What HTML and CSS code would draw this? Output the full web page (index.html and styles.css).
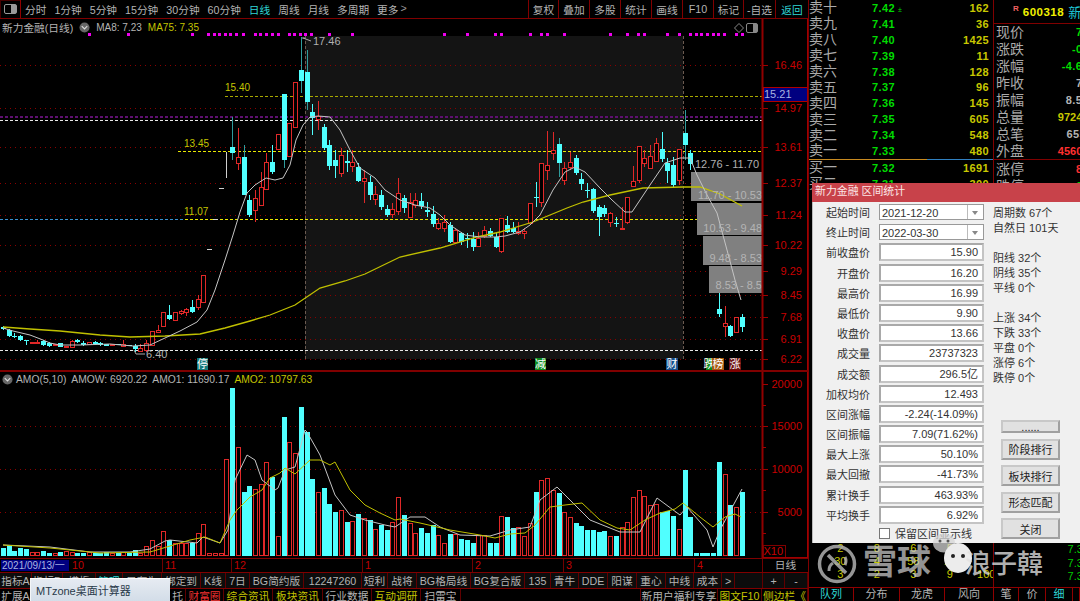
FILE: index.html
```html
<!DOCTYPE html>
<html lang="zh-CN">
<head>
<meta charset="utf-8">
<title>新力金融 日线</title>
<link rel="stylesheet" href="styles.css">
</head>
<body>
<div class="app">
  <section class="left">
    <nav class="topbar">
      <div class="winbtn"><svg width="13" height="10" viewBox="0 0 13 10"><rect x="0.5" y="0.5" width="12" height="9" rx="1.5" fill="none" stroke="#999"/><rect x="7" y="1" width="5" height="8" fill="#999"/></svg></div>
      <div class="periods">
        <span>分时</span><span>1分钟</span><span>5分钟</span><span>15分钟</span><span>30分钟</span><span>60分钟</span><span class="cyan">日线</span><span>周线</span><span>月线</span><span>多周期</span><span>更多</span><span class="more">&gt;</span>
      </div>
      <div class="tools">
        <span>复权</span><span>叠加</span><span>多股</span><span>统计</span><span>画线</span><span>F10</span><span>标记</span><span>-自选</span><span class="cyan">返回</span>
      </div>
    </nav>
    <div class="panel panel-main">
      <svg id="main" class="chart" width="808" height="351" viewBox="0 19 808 351"></svg>
      <div class="legend">
        <span>新力金融(日线)</span>
        <svg class="fold" width="11" height="11" viewBox="0 0 12 12"><circle cx="6" cy="6" r="5.5" fill="#666"/><path d="M3 4.5 6 7.5 9 4.5" fill="none" stroke="#ddd" stroke-width="1.2"/></svg>
        <span class="tight">MA8: 7.23</span><span class="yel tight">MA75: 7.35</span>
        <span class="legend-end">
          <svg width="10" height="10" viewBox="0 0 10 10"><path d="M5 .5 9.5 5 5 9.500 .5 5Z" fill="none" stroke="#888"/></svg>
          <svg width="12" height="10" viewBox="0 0 12 10"><rect x="0.5" y="0.5" width="11" height="9" rx="1.500" fill="none" stroke="#888"/><rect x="7" y="1" width="4" height="8" fill="#888"/></svg>
        </span>
      </div>
    </div>
    <div class="panel panel-amo">
      <svg id="amo" class="chart" width="808" height="186" viewBox="0 372 808 186"></svg>
      <div class="legend legend-amo">
        <svg class="fold" width="11" height="11" viewBox="0 0 12 12"><circle cx="6" cy="6" r="5.5" fill="#666"/><path d="M3 4.5 6 7.5 9 4.5" fill="none" stroke="#ddd" stroke-width="1.2"/></svg>
        <span class="amo-first">AMO(5,10)</span><span>AMOW: 6920.22</span><span>AMO1: 11690.17</span><span class="yel">AMO2: 10797.63</span>
      </div>
    </div>
    <div class="dates">
      <span class="date-now">2021/09/13/一</span><span>11</span><span>12</span><span>1</span><span>2</span><span>3</span><span>4</span><span class="date-unit">日线</span>
    </div>
    <div class="dates-first">10</div>
    <div class="tb tb1">
      <span>指标A</span><span>指标B</span><span>模板</span><span class="cyan">管理</span><span>只有为</span><span>绑定到</span><span>K线</span><span>7日</span><span>BG简约版</span><span>12247260</span><span>短利</span><span>战将</span><span>BG格局线</span><span>BG复合版</span><span>135</span><span>青牛</span><span>DDE</span><span>阳谋</span><span>重心</span><span>中线</span><span>成本</span><span>&gt;</span><span></span><span>+</span><span>-</span>
    </div>
    <div class="tb tb2">
      <span>扩展A</span><span></span><span>托</span><span class="red">财富圈</span><span class="yel">综合资讯</span><span class="yel">板块资讯</span><span>行业数据</span><span class="yel">互动调研</span><span>扫雷宝</span><span></span><span>新用户福利专享</span><span class="yel">图文F10</span><span class="yel">侧边栏《</span>
    </div>
  </section>

  <aside class="right">
    <div class="right-top">
      <div class="book">
        <div class="row"><b>卖十</b><i>7.42<small>±</small></i><u>162</u></div>
        <div class="row"><b>卖九</b><i>7.41</i><u>36</u></div>
        <div class="row"><b>卖八</b><i>7.40</i><u>1425</u></div>
        <div class="row"><b>卖七</b><i>7.39</i><u>11</u></div>
        <div class="row"><b>卖六</b><i>7.38</i><u>128</u></div>
        <div class="row"><b>卖五</b><i>7.37</i><u>96</u></div>
        <div class="row"><b>卖四</b><i>7.36</i><u>145</u></div>
        <div class="row"><b>卖三</b><i>7.35</i><u>605</u></div>
        <div class="row"><b>卖二</b><i>7.34</i><u>548</u></div>
        <div class="row"><b>卖一</b><i>7.33</i><u>480</u></div>
        <div class="book-mid"></div>
        <div class="row"><b>买一</b><i>7.32</i><u>1691</u></div>
        <div class="row"><b>买二</b><i>7.31</i><u>300</u></div>
        <div class="ticks">
          <span>2</span><span>8</span><span>6</span><span>5</span><span></span>
          <span>30</span><span>4</span><span>58</span><span>13</span><span></span>
          <span>3</span><span>2</span><span>3</span><span>9</span><span>100</span>
        </div>
      </div>
      <div class="info">
        <div class="code"><em>R</em><strong>600318</strong><span>新力金融</span></div>
        <div class="irow"><b>现价</b><span class="grn">7.32</span></div>
        <div class="irow"><b>涨跌</b><span class="grn">-0.35</span></div>
        <div class="irow"><b>涨幅</b><span class="grn">-4.60%</span></div>
        <div class="irow"><b>昨收</b><span>7.67</span></div>
        <div class="irow"><b>振幅</b><span>8.50%</span></div>
        <div class="irow"><b>总量</b><span class="yel wide">972414</span></div>
        <div class="irow"><b>总笔</b><span>65512</span></div>
        <div class="irow"><b>外盘</b><span class="hot wide">456012</span></div>
        <div class="irow irow-top"><b>涨停</b><span class="hot">8.44</span></div>
        <div class="irow"><b>跌停</b><span class="grn">6.90</span></div>
        <div class="last-ticks"><span>7.32</span><span>7.33</span><span>7.32</span></div>
      </div>
    </div>
    <div class="tabs">
      <span class="cyan">队列</span><span>分布</span><span>龙虎</span><span>风向</span><span>笔</span><span>价</span><span class="cyan">细</span><span></span>
    </div>
  </aside>
</div>

<div class="tip">MTzone桌面计算器</div>

<div class="dialog">
  <div class="dlg-title">新力金融 区间统计</div>
  <div class="dlg-body">
    <div class="form">
      <label>起始时间</label><div class="combo"><span>2021-12-20</span><i></i></div>
      <label>终止时间</label><div class="combo"><span>2022-03-30</span><i></i></div>
      <label>前收盘价</label><div class="inp">15.90</div>
      <label>开盘价</label><div class="inp">16.20</div>
      <label>最高价</label><div class="inp">16.99</div>
      <label>最低价</label><div class="inp">9.90</div>
      <label>收盘价</label><div class="inp">13.66</div>
      <label>成交量</label><div class="inp">23737323</div>
      <label>成交额</label><div class="inp">296.5亿</div>
      <label>加权均价</label><div class="inp">12.493</div>
      <label>区间涨幅</label><div class="inp">-2.24(-14.09%)</div>
      <label>区间振幅</label><div class="inp">7.09(71.62%)</div>
      <label>最大上涨</label><div class="inp">50.10%</div>
      <label>最大回撤</label><div class="inp">-41.73%</div>
      <label>累计换手</label><div class="inp">463.93%</div>
      <label>平均换手</label><div class="inp">6.92%</div>
      <div class="check"><i></i><span>保留区间显示线</span></div>
    </div>
    <div class="stats">
      <p>周期数 67个</p><p>自然日 101天</p><p class="gap">阳线 32个</p><p>阴线 35个</p><p>平线 0个</p><p class="gap">上涨 34个</p><p>下跌 33个</p><p>平盘 0个</p><p>涨停 6个</p><p>跌停 0个</p>
      <div class="btns">
        <button class="dots">......</button><button>阶段排行</button><button>板块排行</button><button>形态匹配</button><button>关闭</button>
      </div>
    </div>
  </div>
</div>

<div class="mark">
  <svg class="mark-logo" width="40" height="42" viewBox="0 0 40 42"><circle cx="20" cy="21" r="17.500" fill="none" stroke="#b0b0b0" stroke-width="3.500"/><path d="M11 12 29 30" stroke="#b0b0b0" stroke-width="3.500" fill="none"/><path d="M12 28a9 9 0 0 1 4-8M28 14a9 9 0 0 1 0 8" stroke="#b0b0b0" stroke-width="3" fill="none"/></svg>
  <span class="mark-a">雪球</span>
  <svg class="mark-chat" width="42" height="42" viewBox="0 0 42 42"><ellipse cx="12" cy="10" rx="11" ry="9.500" fill="#d6d6d6" fill-opacity=".75"/><circle cx="8" cy="8" r="1.500" fill="#555"/><circle cx="16" cy="8" r="1.500" fill="#555"/><ellipse cx="26" cy="25" rx="14" ry="15" fill="#ececec"/><circle cx="21" cy="23" r="2" fill="#222"/><circle cx="31" cy="23" r="2" fill="#222"/></svg>
  <span class="mark-b">浪子韓</span>
</div>
<script src="chart.js"></script>
</body>
</html>
```
FILE: styles.css
```css
*{box-sizing:border-box}
html,body{margin:0;padding:0;width:1080px;height:601px;overflow:hidden;background:#000}
body{position:relative;color:#b4b4b4;font:10.7px "Liberation Sans","Noto Sans CJK SC",sans-serif}
.cyan{color:#2fd6d6}
.yel{color:#c4c400}
.red{color:#f03030}
.app{display:flex;width:1080px;height:601px}
.left{width:808px;flex:none;display:flex;flex-direction:column;position:relative}
.topbar{height:19px;flex:none;display:flex;align-items:center;border-bottom:1px solid #800000}
.winbtn{width:21px;height:18px;border-right:1px solid #900000;display:flex;align-items:center;justify-content:center;box-shadow:inset 1px 1px 0 #400}
.periods{display:flex;gap:8px;padding-left:4px;flex:1}
.more{color:#999;margin-left:-6px}
.tools{display:grid;grid-template-columns:30px 31px 31px 31px 31px 31px 30px 32px 33px;height:18px;width:280px}
.tools span{border-left:1px solid #800000;display:flex;align-items:center;justify-content:center}
.panel{position:relative;flex:none}
.panel-main{height:351px}
.panel-amo{height:188px;border-top:2px solid #800000}
.chart{display:block}
.legend{position:absolute;left:0;right:50px;top:0;height:17px;display:flex;align-items:center;gap:6px;padding-left:2px;font-size:10.7px}
.tight{font-size:10px}
.legend-end{margin-left:auto;display:flex;gap:2px;align-items:center}
.fold{flex:none}
.legend-amo{top:0;height:14px;gap:5px;font-size:10.300px}
.amo-first{margin-left:-2px}
.dates{height:14px;flex:none;display:grid;grid-template-columns:162px 69px 131px 110px 91px 131px 68px 46px;border-top:1px solid #800000;color:#c00000;font-size:10.700px}
.dates span{border-left:1px solid #700000;padding-left:2px;line-height:13px}
.dates .date-now{background:#000080;color:#a9b4e0;margin:1px;border:0;padding:0 0 0 1px;line-height:11px;width:68px;font-size:10px;white-space:nowrap;overflow:hidden}
.dates-first{position:absolute;left:72px;top:558px;color:#c00000;line-height:14px;font-size:10.700px}
.dates .date-unit{color:#b4b4b4;text-align:center;padding:0}
.tb{flex:none;display:grid;border-top:1px solid #800000}
.tb span{display:flex;align-items:center;justify-content:center;white-space:nowrap;overflow:hidden;border-right:1px solid #600000}
.tb1{height:16px;grid-template-columns:32px 31px 33px 27px 39px 39px 25px 24px 54px 58px 26px 29px 54px 54px 26px 28px 29px 29px 29px 28px 28px 13px 28px 22px 23px;background:#0c0c0c}
.tb2{height:13px;grid-template-columns:32px 138px 16px 38px 49px 50px 49px 49px 40px 180px 77px 44px 46px}
.right{width:272px;flex:none;display:flex;flex-direction:column;border-left:1px solid #800000}
.right-top{height:587px;flex:none;display:flex}
.book{width:184px;flex:none;display:flex;flex-direction:column}
.row{height:15.9px;flex:none;display:grid;grid-template-columns:63px 1fr 60px;padding-right:4px;align-items:center}
.row b{font-weight:400;font-size:14px;color:#aaa;line-height:15px;white-space:nowrap}
.row i{font:700 11px "Liberation Sans",sans-serif;letter-spacing:.4px;color:#00dc00}
.row i small{font-size:7px;font-weight:400;margin-left:3px}
.row u{font:700 11px "Liberation Sans",sans-serif;letter-spacing:.4px;text-decoration:none;text-align:right;color:#c8c800}
.book-mid{height:1px;flex:none;margin-bottom:.1px;background:linear-gradient(90deg,#c88a20 0 64%,#3080c0 64% 100%)}
.ticks{margin-top:auto;height:45px;display:grid;grid-template-columns:repeat(5,36.500px);grid-auto-rows:13px;font-size:11px;color:#c8c800;text-align:center;padding:0 0 4px 13px;overflow:hidden}
.info{flex:1;border-left:1px solid #800000;overflow:hidden;display:flex;flex-direction:column}
.code{height:24px;flex:none;border-bottom:1px solid #800000;display:flex;align-items:center;white-space:nowrap;padding-left:19px;gap:4px}
.code em{font:700 8px "Liberation Sans",sans-serif;color:#f06060;align-self:flex-start;margin-top:4px}
.code strong{font:700 11.500px "Liberation Sans",sans-serif;letter-spacing:.5px;color:#f0f000}
.code span{font-size:13px;color:#1fc8d8}
.irow{height:16.900px;flex:none;display:flex;justify-content:space-between;align-items:center;white-space:nowrap}
.irow b{font-weight:400;font-size:14px;color:#aaa;line-height:16px;padding-left:2px}
.irow span{font:700 11px "Liberation Sans",sans-serif;letter-spacing:.4px;margin-right:-19px;color:#b4b4b4}
.irow .wide{letter-spacing:.1px;margin-right:-15px}
.irow .grn{color:#00dc00}
.irow .yel{color:#c8c800}
.irow .hot{color:#ff3030}
.irow-top{border-top:1px solid #800000;height:18px}
.last-ticks{margin-top:auto;height:44px;display:grid;grid-auto-rows:13.500px;justify-items:end;color:#00c800;font-size:11px;padding-bottom:2px}
.last-ticks span{margin-right:-9px}
.tabs{height:14px;flex:none;display:grid;grid-template-columns:45px 46px 45px 49px 25px 27px 27px 7px;border-top:1px solid #900000;font-size:11px}
.tabs span{display:flex;align-items:center;justify-content:center;border-right:1px solid #900000;line-height:13px;overflow:hidden}
.tip{position:absolute;left:30px;top:578px;width:140px;height:23px;background:linear-gradient(#e6ebf2,#d3dde8);border-top:1px solid #fff;border-left:1px solid #f4f6f8;color:#2a3a4a;font-size:11px;padding:5px 0 0 5px;line-height:14px}
.dialog{position:absolute;left:812px;top:183px;width:268px;height:360px;background:#f0f0f0;color:#222;border-left:1px solid #bbb;font-size:11px}
.dlg-title{height:19px;background:#c8424a;color:#fbe6e6;line-height:17px;padding-left:3px;font-size:10.900px;margin-left:-1px}
.dlg-body{display:flex;padding-top:1px}
.form{display:grid;grid-template-columns:57px 105px;column-gap:9px;row-gap:2.200px;align-items:center;grid-auto-rows:18px}
.form label{text-align:right;white-space:nowrap;color:#333}
.inp,.combo{height:18px;background:#fff;border:2px solid #a9a9a9;border-right-color:#c4c4c4;border-bottom-color:#c4c4c4;line-height:14px}
.inp{text-align:right;padding-right:4px;color:#333}
.combo{display:flex;justify-content:space-between;padding-left:2px;border-width:1px;border-color:#999;line-height:16px;margin:1px 0;height:16px;color:#333}
.combo i{width:16px;border-left:1px solid #bbb;position:relative}
.combo i::after{content:"";position:absolute;left:4px;top:6px;border:3px solid transparent;border-top:4px solid #888;border-bottom:0}
.check{grid-column:2;display:flex;gap:5px;align-items:center;height:14px;align-self:start;white-space:nowrap;color:#333}
.check i{width:11px;height:11px;background:#fff;border:1px solid #777}
.stats{margin-left:9px;flex:1;padding-top:3px}
.stats p{margin:0;height:15px;line-height:15px;white-space:nowrap;color:#333}
.stats .gap{margin-top:15px}
.btns{display:flex;flex-direction:column;margin:34px 0 0 8px;width:59px;gap:5.500px}
.btns button{height:21px;padding:0;background:#e1e1e1;border:2px solid #a0a0a0;border-top-color:#c8c8c8;border-left-color:#c8c8c8;font:11px "Liberation Sans","Noto Sans CJK SC",sans-serif;color:#222}
.btns .dots{height:13px;line-height:8px}
.mark{position:absolute;left:817px;top:533px;width:240px;height:54px;display:flex;pointer-events:none}
.mark-logo{margin-top:10px;flex:none;opacity:.85}
.mark-a{font-size:34px;font-weight:700;line-height:50px;color:rgba(205,205,205,.72);margin:4px 0 0 6px;white-space:nowrap;width:70px}
.mark-chat{margin-left:-1px;flex:none}
.mark-b{font:500 26px "Noto Sans CJK TC","Noto Sans CJK SC",sans-serif;line-height:44px;color:rgba(225,225,225,.8);margin:7px 0 0 -9px;white-space:nowrap}
.gl{stroke:#8a0000;stroke-width:1;stroke-dasharray:1 4}
.vd{stroke:#6a5a50;stroke-dasharray:3 2}
.ax{fill:#c80000;font:11px "Liberation Sans",sans-serif;text-anchor:end}
.axl{stroke:#a00000;stroke-width:1}
.axs{stroke:#900000;stroke-width:2}
.lb{fill:#c4c400;font:10px "Liberation Sans",sans-serif}
.pk{fill:#b0b0b0;font:11px "Liberation Sans",sans-serif}
.proft{fill:#b4b4b4;font:11px "Liberation Sans",sans-serif;text-anchor:end}
.bg{fill:#fff;font:11px "Noto Sans CJK SC",sans-serif;text-anchor:middle}
.ma1{fill:none;stroke:#c4c4c4;stroke-width:1}
.ma2{fill:none;stroke:#c0c000;stroke-width:1.300}
.ma2t{stroke-width:1}
.curr{fill:#000080;stroke:#b00000}
.currt{fill:#a9b4e0;font:11px "Liberation Sans",sans-serif}
.x10{fill:none;stroke:#800000}
```
FILE: chart.js
```js
var z11 = function (v) { return 100 + v / 3; };
var X = function (i) { return Math.round(3 + 5.727 * i); };

var early = [
 ['d',327,329,326,330],['d',330,336,329,337],['d',336,337,333,338],['d',336,340,335,341],['d',340,341,340,345],
 ['u',342,343,342,344],['u',342,343,340,344],['d',341,345,340,346],['d',343,346,342,347],['u',344,345,344,345],
 ['d',343,347,343,347],['u',346,347,346,347],['u',341,347,340,347],['d',340,342,339,343],['d',343,345,341,346],
 ['u',342,344,342,344],['d',342,344,341,345],['d',343,345,342,346],['d',344,346,344,346],['u',344,345,344,345],
 ['d',344,345,344,345],['u',344,346,340,347],['d',345,346,345,346],['d',346,349,344,352],['u',348,351,344,352],
 ['u',343,350,340,352],['u',331,345,331,346],['u',330,332,325,333],['u',312,326,312,326],['d',315,319,305,320],
 ['u',312,320,312,320],['u',311,313,310,315],['u',309,312,308,316],['d',307,312,300,313],['u',299,307,295,310],
 ['u',275,302,275,302],['g',249,249,249,249],['g',219,219,219,219],['g',188,188,188,188],['g',165,165,152,178],
 ['d',147,153,117,160],['u',157,163,128,170],['d',157,195,145,195],['d',200,215,195,217],['u',198,210,190,222],
 ['u',187,205,172,206],['u',162,189,153,190],['d',162,172,145,174],['u',134,149,134,150],['d',94,160,94,168],
 ['u',123,156,123,156],['u',82,127,82,128],['d',70,81,37,93],['d',72,102,50,110],['d',112,118,104,135],
 ['u',116,119,101,130],['d',127,148,124,150],['d',145,166,140,170],['d',160,166,150,178],['u',155,173,148,177],
 ['d',161,163,150,172],['u',162,166,150,172],['d',167,181,163,182],['u',178,181,170,203],['d',182,195,176,200],
 ['u',194,199,186,205],['d',195,207,190,210],['d',209,215,205,217],['u',209,214,203,218],['u',193,211,178,215]
];
var mid = [
 ['d',295,325,285,340],['u',305,350,280,352],['u',300,315,280,325],['d',302,318,278,328],['d',330,335,305,352],
 ['d',342,372,318,380],['u',370,383,355,390],['u',367,383,345,395],['d',376,425,365,430],['u',390,425,385,430],
 ['d',400,425,395,435],['d',415,418,400,445],['d',418,440,395,452],['u',415,437,395,440],['u',390,408,378,415],
 ['d',392,408,385,412],['d',410,440,395,445],['u',355,452,355,458],['d',375,395,347,400],['d',383,395,365,400],
 ['u',392,400,365,405],['u',394,398,385,418],['u',308,368,308,375],['d',290,293,247,320],['u',190,305,190,320],
 ['u',195,210,93,240],['u',150,158,97,180],['d',132,188,115,230],['u',205,240,185,255],['u',185,200,155,210],
 ['d',175,218,165,225],['d',237,253,220,270],['d',270,272,250,295],['d',267,332,265,340],['d',320,350,315,408],
 ['d',325,342,315,350],['u',340,367,335,382],['d',370,372,350,380],['u',384,385,320,388],['u',290,365,290,372],
 ['u',242,257,198,260],['u',137,240,137,248],['u',175,190,150,200],['u',168,205,135,208],['u',130,182,113,185],
 ['d',148,178,95,185],['d',190,213,175,250],['d',195,255,170,262],['u',148,240,148,255],['d',98,135,30,180],
 ['d',160,192,150,210]
].map(function (c) { return [c[0], z11(c[1]), z11(c[2]), z11(c[3]), z11(c[4])]; });
var hidden = [null, null, null, null];
var late = [
 ['d',628,643,580,650],['u',668,677,618,710],['d',678,708,675,710],['u',650,697,650,697],['d',650,680,642,697]
].map(function (c) { return [c[0], z11(c[1]), z11(c[2]), z11(c[3]), z11(c[4])]; });
var candles = early.concat(mid, hidden, late);

var vols = [548,545,551,548,549,552,552,551,553,553,552,551,552,553,553,552,553,553,552,553,
 553,552,553,550,553,546,540,546,531,540,543,543,543,543,533,524,553,553,553,459,
 388,447,492,486,489,484,462,477,536,417,442,453,407,432,479,492,488,504,512,510,
 522,521,514,518,520,529,525,530,522,497,515,523,533,528,533,525,535,543,534,534,
 539,540,543,535,535,543,543,516,517,528,527,536,523,492,480,478,490,493,512,517,
 523,526,530,530,532,531,536,536,527,522,497,490,496,505,504,512,511,516,529,470,
 517,553,553,553,553,462,474,505,507,492];

function pts(a) { return a.map(function (p) { return p[0] + ',' + p[1]; }).join(' '); }
function line(x1, y1, x2, y2, cls, attr) {
  return '<line x1="' + x1 + '" y1="' + y1 + '" x2="' + x2 + '" y2="' + y2 + '" class="' + cls + '" ' + (attr || '') + '/>';
}
function rect(x, y, w, h, fill, stroke) {
  return '<rect x="' + x + '" y="' + y + '" width="' + w + '" height="' + h + '" fill="' + fill + '"' + (stroke ? ' stroke="' + stroke + '"' : '') + ' shape-rendering="crispEdges"/>';
}
function text(x, y, s, cls) { return '<text x="' + x + '" y="' + y + '" class="' + cls + '">' + s + '</text>'; }
function dash(x1, x2, y, color, w) {
  return '<line x1="' + x1 + '" y1="' + y + '" x2="' + x2 + '" y2="' + y + '" stroke="' + color + '" stroke-width="' + (w || 1) + '" stroke-dasharray="3 2" shape-rendering="crispEdges"/>';
}

var RED = '#e02828', CY = '#50ffff', TEAL = '#2f9c9c';
var m = '';
m += rect(305, 36, 378, 323, '#141414');
var ticks = [[16.46,65],[14.97,108],[13.61,147],[12.37,183],[11.24,215],[10.22,245],[9.29,271],[8.45,295],[7.68,317],[6.91,339],[6.22,359]];
ticks.forEach(function (t) { m += line(0, t[1] + .5, 762, t[1] + .5, 'gl'); });
m += line(305.5, 36, 305.5, 359, 'vd') + line(683.5, 36, 683.5, 359, 'vd');
var dots = [88,127,191,207,213,218,224,229,235,242,254,259,265,271,277,288,293,299,304,310,328,351,443,466,494,500,529,540,546,563,609,626,637,643,666,678,689,695,700,706,712,717,723,735,741];
dots.forEach(function (x) { m += rect(x, 33, 3, 3, '#f000f0'); });

m += dash(0, 762, 117, '#5e1070', 2);
m += dash(0, 762, 120.5, '#e8e8e8');
m += dash(0, 762, 350.5, '#e8e8e8');
m += dash(225, 762, 96, '#a8a800');
m += dash(178, 762, 151.5, '#e8e800');
m += dash(0, 185, 219.500, '#3a90d0');
m += dash(185, 762, 219.500, '#e8e800');

candles.forEach(function (c, i) {
  if (!c) return;
  var x = X(i), t = c[0], top = Math.round(c[1]), bot = Math.round(c[2]), wt = Math.round(c[3]), wb = Math.round(c[4]);
  if (t === 'g') {
    if (wb > wt) m += rect(x, wt, 1, wb - wt, '#cfcfcf');
    else m += rect(x - 2, top, 5, 1, '#cfcfcf');
    return;
  }
  var col = t === 'u' ? RED : CY;
  var wc = t === 'u' ? RED : (wb - wt > 35 ? TEAL : CY);
  if (wt < top) m += rect(x, wt, 1, top - wt, wc);
  if (wb > bot) m += rect(x, bot, 1, wb - bot, wc);
  if (t === 'u') m += rect(x - 2 + .5, top + .5, 4, Math.max(bot - top, 1), '#000', col);
  else m += rect(x - 2, top, 5, Math.max(bot - top, 1), col);
});

[[691,172,71,29],[697,203,65,32],[703,236,59,29],[709,266,53,27]].forEach(function (b) { m += rect(b[0], b[1], b[2], b[3], '#808080'); });

var ma8 = [[3,328],[13,331],[30,335],[43,340],[50,343],[60,345],[80,345],[110,344],[133,346],[150,345],[165,338],[180,331],[197,322],[207,310],[215,290],[225,260],[233,235],[240,212],[247,193],[255,185],[266,178],[275,180],[283,178],[290,165],[296,140],[303,125],[310,117],[318,116],[330,117],[340,130],[350,150],[360,168],[375,178],[385,190],[400,200],[415,205],[430,208],[440,215],[450,225],[465,235],[480,237],[495,237],[505,236],[520,232],[530,225],[540,215],[553,190],[565,172],[575,167],[585,172],[600,188],[612,200],[625,212],[632,212],[640,200],[650,185],[665,163],[680,158],[690,158],[697,175],[707,195],[717,213],[727,250],[735,280],[741,300]];
var ma75 = [[3,327],[30,329],[60,331],[100,335],[130,337],[165,336],[200,334],[225,328],[250,321],[270,315],[295,305],[320,288],[345,281],[365,274],[400,257],[440,248],[477,237],[500,232],[533,222],[567,208],[583,202],[610,195],[643,188],[683,187],[700,187],[720,194],[742,206]];
m += '<polyline class="ma2" points="' + pts(ma75) + '"/>';
m += '<polyline class="ma1" points="' + pts(ma8) + '"/>';

m += text(225, 91, '15.40', 'lb') + text(184, 147, '13.45', 'lb') + text(184, 215, '11.07', 'lb');
m += text(313, 45, '17.46', 'pk') + text(146, 358, '6.40', 'pk');
m += '<path d="M302 38h3M303 38l8 3" stroke="#aaa" fill="none"/><path d="M134 350l2 4h9" stroke="#aaa" fill="none"/>';
m += text(695, 168, '12.76 - 11.70', 'pk');
m += text(762, 199, '11.70 - 10.53', 'proft') + text(762, 232, '10.53 - 9.48', 'proft') + text(762, 262, '9.48 - 8.53', 'proft') + text(762, 289, '8.53 - 8.5', 'proft');

[[197,11,'#157a7a','停'],[535,11,'#0c8a20','减'],[666,12,'#14508c','财'],[706,6,'#0c8a20','跌'],[712,12,'#a85a10','榜'],[729,12,'#6e1212','涨']].forEach(function (b) {
  m += rect(b[0], 358, b[1], 12, b[2]);
  m += text(b[0] + b[1] / 2, 368, b[3], 'bg');
});

m += line(762.5, 19, 762.5, 370, 'axs');
ticks.forEach(function (t) {
  m += line(763, t[1] + .5, 768, t[1] + .5, 'axl');
  m += text(802, t[1] + 4, t[0].toFixed(2), 'ax');
});
m += '<rect x="763.5" y="87.5" width="44" height="14" class="curr"/>' + text(764, 98, '15.21', 'currt');
m += line(807.5, 19, 807.5, 370, 'axl');
document.getElementById('main').innerHTML = m;

var a = '';
[426.5, 469.5, 512.5].forEach(function (y) { a += line(0, y, 762, y, 'gl'); });
vols.forEach(function (top, i) {
  var c = candles[i], x = X(i), up = c && c[0] !== 'd';
  if (up) a += rect(x - 2 + .5, top + .5, 4, 555 - top, '#000', RED);
  else a += rect(x - 2, top, 5, 556 - top, CY);
});
var amo1 = [[3,545],[50,547],[90,552],[130,552],[150,549],[165,541],[170,540],[197,543],[203,537],[220,543],[228,530],[235,480],[247,455],[255,460],[262,480],[275,490],[278,488],[285,470],[295,467],[305,430],[307,432],[320,455],[335,495],[350,515],[365,520],[385,525],[395,527],[410,517],[425,517],[440,527],[460,535],[490,536],[510,530],[530,527],[540,500],[557,487],[575,505],[590,520],[620,532],[640,532],[657,498],[680,515],[687,507],[707,530],[713,547],[720,530],[742,489]];
var amo2 = [[3,545],[50,548],[100,553],[150,552],[190,540],[205,537],[220,543],[230,520],[237,510],[250,497],[262,490],[270,478],[280,473],[285,468],[295,474],[310,460],[320,460],[330,465],[335,462],[350,490],[365,505],[380,513],[395,520],[400,519],[420,523],[450,530],[480,535],[495,538],[510,534],[525,533],[535,525],[550,507],[565,505],[582,503],[600,520],[617,528],[630,530],[645,520],[660,513],[675,509],[683,503],[700,517],[713,527],[725,517],[735,514],[741,517]];
a += '<polyline class="ma1" points="' + pts(amo1) + '"/>';
a += '<polyline class="ma2 ma2t" points="' + pts(amo2) + '"/>';
a += line(762.5, 372, 762.5, 558, 'axs');
[384,405,426,447,469,490,512,533].forEach(function (y, i) {
  a += line(763, y + .5, i % 2 ? 766 : 768, y + .5, 'axl');
});
[[20000,388],[15000,430],[10000,473],[5000,516]].forEach(function (t) { a += text(802, t[1], t[0], 'ax'); });
a += '<rect x="763.500" y="545.500" width="22" height="12" class="x10"/>' + text(783, 555, 'X10', 'ax');
a += line(763, 557.500, 808, 557.500, 'axl');
a += line(807.5, 372, 807.5, 558, 'axl');
document.getElementById('amo').innerHTML = a;
```
